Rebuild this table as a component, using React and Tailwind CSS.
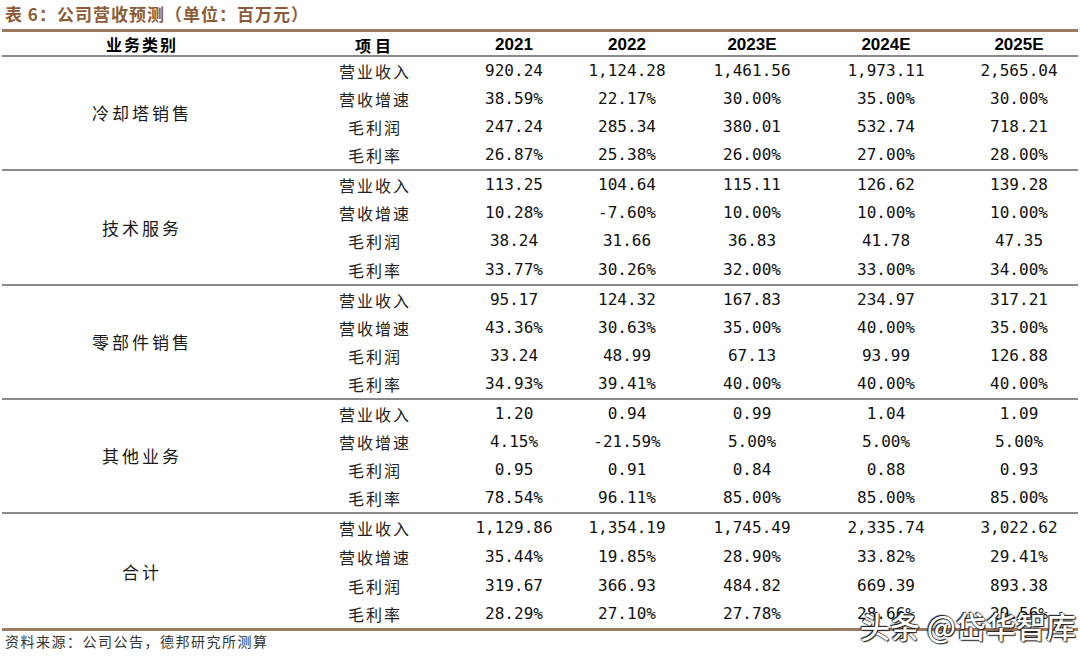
const GROUPS = [
  {
    name: '冷却塔销售',
    rows: [
      ['营业收入', '920.24', '1,124.28', '1,461.56', '1,973.11', '2,565.04'],
      ['营收增速', '38.59%', '22.17%', '30.00%', '35.00%', '30.00%'],
      ['毛利润', '247.24', '285.34', '380.01', '532.74', '718.21'],
      ['毛利率', '26.87%', '25.38%', '26.00%', '27.00%', '28.00%'],
    ],
  },
  {
    name: '技术服务',
    rows: [
      ['营业收入', '113.25', '104.64', '115.11', '126.62', '139.28'],
      ['营收增速', '10.28%', '-7.60%', '10.00%', '10.00%', '10.00%'],
      ['毛利润', '38.24', '31.66', '36.83', '41.78', '47.35'],
      ['毛利率', '33.77%', '30.26%', '32.00%', '33.00%', '34.00%'],
    ],
  },
  {
    name: '零部件销售',
    rows: [
      ['营业收入', '95.17', '124.32', '167.83', '234.97', '317.21'],
      ['营收增速', '43.36%', '30.63%', '35.00%', '40.00%', '35.00%'],
      ['毛利润', '33.24', '48.99', '67.13', '93.99', '126.88'],
      ['毛利率', '34.93%', '39.41%', '40.00%', '40.00%', '40.00%'],
    ],
  },
  {
    name: '其他业务',
    rows: [
      ['营业收入', '1.20', '0.94', '0.99', '1.04', '1.09'],
      ['营收增速', '4.15%', '-21.59%', '5.00%', '5.00%', '5.00%'],
      ['毛利润', '0.95', '0.91', '0.84', '0.88', '0.93'],
      ['毛利率', '78.54%', '96.11%', '85.00%', '85.00%', '85.00%'],
    ],
  },
  {
    name: '合计',
    rows: [
      ['营业收入', '1,129.86', '1,354.19', '1,745.49', '2,335.74', '3,022.62'],
      ['营收增速', '35.44%', '19.85%', '28.90%', '33.82%', '29.41%'],
      ['毛利润', '319.67', '366.93', '484.82', '669.39', '893.38'],
      ['毛利率', '28.29%', '27.10%', '27.78%', '28.66%', '29.56%'],
    ],
  },
]

const YEARS = ['2021', '2022', '2023E', '2024E', '2025E']
const COLS = 'grid grid-cols-[186px_92px_134px_116px_152px_114px]'
const CJK = "font-['Noto_Sans_CJK_SC',sans-serif]"
const NUM = "font-['DejaVu_Sans_Mono','Noto_Sans_CJK_SC',monospace]"

function Group({ group, last }) {
  return (
    <div className={`flex h-[114.3px] ${last ? '' : 'border-b-2 border-[#8a8a8a]'}`}>
      <div className={`w-[280px] flex items-center justify-center text-[17px] tracking-[3px] text-[#1a1a1a] ${CJK}`}>
        {group.name}
      </div>
      <div className="flex-1 flex flex-col">
        {group.rows.map(r => (
          <div key={r[0]} className={`${COLS} flex-1 items-center`}>
            <div className={`text-center text-[16px] tracking-[2px] text-[#222] ${CJK}`}>{r[0]}</div>
            {r.slice(1).map((v, i) => (
              <div key={i} className={`text-center text-[16px] text-[#111] ${NUM}`}>{v}</div>
            ))}
          </div>
        ))}
      </div>
    </div>
  )
}

export default function App() {
  return (
    <div className="relative w-[1080px] h-[658px] bg-white overflow-hidden">
      <div className={`pl-[5px] pt-[1px] h-[29px] text-[17px] font-bold tracking-[1px] text-[#8d5b36] ${CJK}`}>
        表 6：公司营收预测（单位：百万元）
      </div>
      <div className="w-[1076px] ml-[2px] border-t-[3px] border-[#9b7b60]">
        <div className="flex h-[25px] border-b-2 border-[#8a8a8a]">
          <div className={`w-[280px] flex items-center justify-center text-[16px] font-bold tracking-[2px] text-black ${CJK}`}>业务类别</div>
          <div className={`${COLS} flex-1 items-center`}>
            <div className={`text-center text-[16px] font-bold tracking-[4px] text-black ${CJK}`}>项目</div>
            {YEARS.map(y => (
              <div key={y} className="text-center text-[17px] font-bold text-black font-['Liberation_Sans',sans-serif]">{y}</div>
            ))}
          </div>
        </div>
        {GROUPS.map((g, i) => <Group key={g.name} group={g} last={i === GROUPS.length - 1} />)}
        <div className="border-t-[3px] border-[#9b7b60]" />
      </div>
      <div className={`pl-[5px] text-[14px] tracking-[1.5px] text-[#333] ${CJK}`}>
        资料来源：公司公告，德邦研究所测算
      </div>
      <div className={`absolute left-[860px] top-[603px] text-[30px] font-medium text-white [text-shadow:0_0_2px_#111,1px_1px_1px_#222,-1px_-1px_1px_#222] ${CJK}`}>
        头条 @岱华智库
      </div>
    </div>
  )
}
